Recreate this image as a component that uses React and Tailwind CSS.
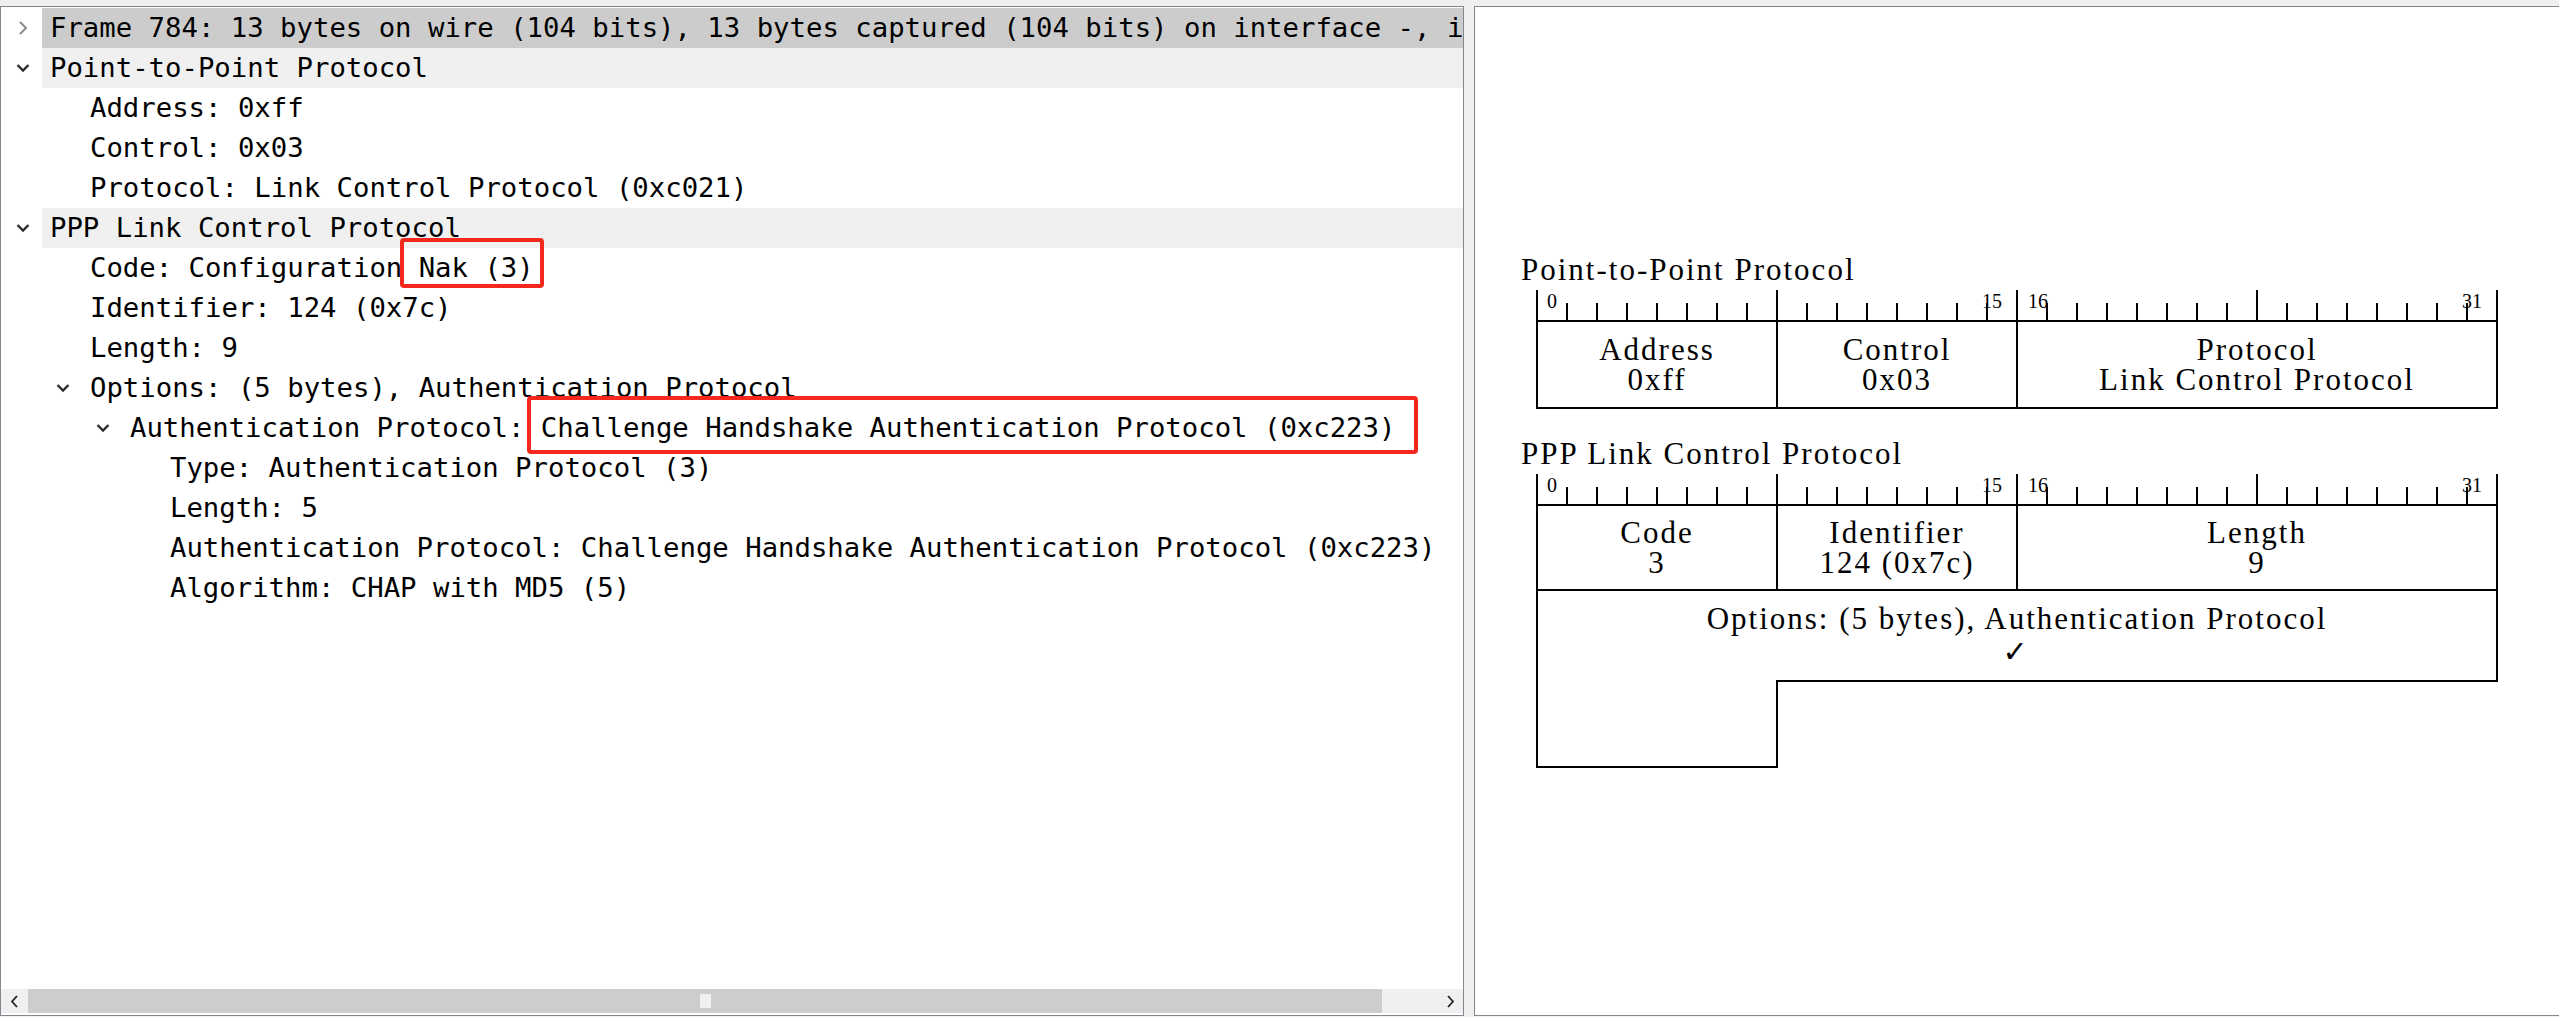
import React from "react";

const rows = [
  { lvl: 0, arrow: "closed", text: "Frame 784: 13 bytes on wire (104 bits), 13 bytes captured (104 bits) on interface -, i", bg: "bg-[#cccccc]" },
  { lvl: 0, arrow: "open", text: "Point-to-Point Protocol", bg: "bg-[#f0f0f0]" },
  { lvl: 1, text: "Address: 0xff" },
  { lvl: 1, text: "Control: 0x03" },
  { lvl: 1, text: "Protocol: Link Control Protocol (0xc021)" },
  { lvl: 0, arrow: "open", text: "PPP Link Control Protocol", bg: "bg-[#f0f0f0]" },
  { lvl: 1, text: "Code: Configuration Nak (3)" },
  { lvl: 1, text: "Identifier: 124 (0x7c)" },
  { lvl: 1, text: "Length: 9" },
  { lvl: 1, arrow: "open", text: "Options: (5 bytes), Authentication Protocol" },
  { lvl: 2, arrow: "open", text: "Authentication Protocol: Challenge Handshake Authentication Protocol (0xc223)" },
  { lvl: 3, text: "Type: Authentication Protocol (3)" },
  { lvl: 3, text: "Length: 5" },
  { lvl: 3, text: "Authentication Protocol: Challenge Handshake Authentication Protocol (0xc223)" },
  { lvl: 3, text: "Algorithm: CHAP with MD5 (5)" },
];

const indent = ["pl-0", "pl-[40px]", "pl-[80px]", "pl-[120px]"];

function Chevron({ type }) {
  if (type === "closed") {
    return (
      <svg width="10" height="16" viewBox="0 0 10 16" className="ml-[2px]">
        <polyline points="2,2 8,8 2,14" fill="none" stroke="#8c8c8c" strokeWidth="2" />
      </svg>
    );
  }
  if (type === "open") {
    return (
      <svg width="14" height="10" viewBox="0 0 14 10">
        <polyline points="1.5,2 7,7.5 12.5,2" fill="none" stroke="#2b2b2b" strokeWidth="2.4" />
      </svg>
    );
  }
  return null;
}

function TreeRow({ row }) {
  return (
    <div className={`flex h-[40px] ${indent[row.lvl]}`}>
      <div className="w-[41px] shrink-0 flex items-center pl-[15px]">
        <Chevron type={row.arrow} />
      </div>
      <div className={`flex-1 min-w-0 flex items-center pl-[8px] overflow-hidden whitespace-nowrap ${row.bg || ""}`}>
        <span>{row.text}</span>
      </div>
    </div>
  );
}

function Ruler() {
  const ticks = [];
  for (let i = 0; i <= 32; i++) {
    const x = 1 + i * 30;
    const long = i % 8 === 0;
    ticks.push(
      <line key={i} x1={x} x2={x} y1={long ? 0 : 13} y2={30} stroke="#000" strokeWidth="2" />
    );
  }
  return (
    <div className="relative h-[30px] w-[962px]">
      <svg width="962" height="30" viewBox="0 0 962 30" className="block">
        {ticks}
      </svg>
      <span className="absolute left-[11px] top-[1px] text-[20px] leading-[20px]">0</span>
      <span className="absolute left-[446px] top-[1px] text-[20px] leading-[20px]">15</span>
      <span className="absolute left-[492px] top-[1px] text-[20px] leading-[20px]">16</span>
      <span className="absolute left-[926px] top-[1px] text-[20px] leading-[20px]">31</span>
    </div>
  );
}

function Cell({ a, b, className }) {
  return (
    <div className={`flex flex-col items-center justify-center leading-[30px] ${className || ""}`}>
      <div>{a}</div>
      <div>{b}</div>
    </div>
  );
}

function Title({ children }) {
  return (
    <div className="-ml-[15px] h-[31px] leading-[31px] text-[31px] tracking-[2px] mb-[5px] whitespace-nowrap">
      {children}
    </div>
  );
}

export default function App() {
  return (
    <div className="w-[2559px] h-[1017px] bg-[#f0f0f0] flex pt-[6px] pb-px gap-[10px] overflow-hidden">
      {/* Left tree pane */}
      <div className="relative w-[1464px] h-[1010px] shrink-0 border border-[#828790] bg-white flex flex-col font-['DejaVu_Sans_Mono',monospace] text-[27.3px] text-black">
        <div className="flex-1 pt-px overflow-hidden">
          {rows.map((r, i) => (
            <TreeRow key={i} row={r} />
          ))}
        </div>
        {/* horizontal scrollbar */}
        <div className="h-[24px] mb-[2px] flex bg-[#f0f0f0]">
          <div className="w-[27px] flex items-center justify-center">
            <svg width="9" height="13" viewBox="0 0 9 13">
              <polyline points="7,1 2,6.5 7,12" fill="none" stroke="#222" strokeWidth="1.8" />
            </svg>
          </div>
          <div className="w-[1354px] bg-[#cdcdcd] flex items-center justify-center">
            <div className="w-[11px] h-[14px] bg-[#f0f0f0]" />
          </div>
          <div className="flex-1" />
          <div className="w-[25px] flex items-center justify-center">
            <svg width="9" height="13" viewBox="0 0 9 13">
              <polyline points="2,1 7,6.5 2,12" fill="none" stroke="#222" strokeWidth="1.8" />
            </svg>
          </div>
        </div>
        {/* annotation boxes */}
        <div className="absolute left-[399px] top-[231px] w-[144px] h-[50px] border-4 border-[#f5281e] rounded-[4px]" />
        <div className="absolute left-[526px] top-[389px] w-[891px] h-[58px] border-4 border-[#f5281e] rounded-[4px]" />
      </div>

      {/* Right diagram pane */}
      <div className="flex-1 h-[1010px] border border-r-0 border-[#828790] bg-white flex items-center justify-center font-['Liberation_Serif',serif] text-black">
        <div className="w-[962px] flex flex-col">
          {/* Diagram 1 */}
          <Title>Point-to-Point Protocol</Title>
          <Ruler />
          <div className="h-[89px] border-2 border-black grid grid-cols-[238px_240px_1fr] text-[31px] tracking-[2px]">
            <Cell a="Address" b="0xff" />
            <Cell a="Control" b="0x03" className="border-l-2 border-black" />
            <Cell a="Protocol" b="Link Control Protocol" className="border-l-2 border-black" />
          </div>

          {/* Diagram 2 */}
          <div className="mt-[29px]">
            <Title>PPP Link Control Protocol</Title>
          </div>
          <Ruler />
          <div className="text-[31px] tracking-[2px]">
            <div className="h-[87px] border-2 border-black grid grid-cols-[238px_240px_1fr]">
              <Cell a="Code" b="3" />
              <Cell a="Identifier" b="124 (0x7c)" className="border-l-2 border-black" />
              <Cell a="Length" b="9" className="border-l-2 border-black" />
            </div>
            <div className="h-[89px] border-x-2 border-black flex flex-col items-center justify-center gap-[5px]">
              <div className="leading-[28px]">Options: (5 bytes), Authentication Protocol</div>
              <div className="font-['DejaVu_Sans',sans-serif] text-[30px] leading-[28px] font-bold tracking-normal -ml-[4px]">✓</div>
            </div>
            <div className="flex">
              <div className="w-[242px] h-[88px] border-x-2 border-b-2 border-black" />
              <div className="flex-1 border-t-2 border-black" />
            </div>
          </div>
        </div>
      </div>
    </div>
  );
}
